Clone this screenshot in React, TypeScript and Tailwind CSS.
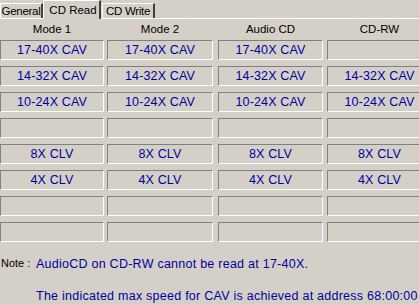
import React from 'react';

// 光驱读取速度表（经典 Windows 属性页样式）

type Cell = string | null;

const columns: { title: string; cells: Cell[] }[] = [
  { title: 'Mode 1', cells: ['17-40X CAV', '14-32X CAV', '10-24X CAV', null, '8X CLV', '4X CLV', null, null] },
  { title: 'Mode 2', cells: ['17-40X CAV', '14-32X CAV', '10-24X CAV', null, '8X CLV', '4X CLV', null, null] },
  { title: 'Audio CD', cells: ['17-40X CAV', '14-32X CAV', '10-24X CAV', null, '8X CLV', '4X CLV', null, null] },
  { title: 'CD-RW', cells: [null, '14-32X CAV', '10-24X CAV', null, '8X CLV', '4X CLV', null, null] },
];

// 每列的宽度和左边距，照原图的像素量出来
const colClass = [
  'w-[104px] shrink-0',
  'w-[106px] ml-[3px] shrink-0',
  'w-[105px] ml-[5px] shrink-0',
  'w-[105px] ml-[4px] shrink-0',
];

function Tab({ label, width, active = false }: { label: string; width: string; active?: boolean }) {
  if (active) {
    return (
      <div className={`${width} h-[19px] -mb-px pl-[3px] pt-[2px] bg-[#d4d0c8] border-l border-t border-white border-r-2 border-r-[#404040] text-[11.5px] leading-[14px] text-black text-center whitespace-nowrap`}>
        {label}
      </div>
    );
  }
  return (
    <div className={`${width} h-[15px] border-l border-t border-white border-r-2 border-r-[#404040] text-[11.5px] tracking-[-0.3px] leading-[14px] text-black text-center whitespace-nowrap`}>
      {label}
    </div>
  );
}

export default function App() {
  return (
    <div
      className="w-[419px] h-[305px] overflow-hidden bg-[#d4d0c8] relative"
      style={{ fontFamily: '"Liberation Sans", Arial, sans-serif' }}
    >
      {/* 标签栏 */}
      <div className="flex items-end h-[19px] border-b border-white">
        <Tab label="General" width="w-[43px]" />
        <Tab label="CD Read" width="w-[58px]" active />
        <Tab label="CD Write" width="w-[53px] ml-[1px]" />
      </div>

      {/* 速度表格 */}
      <div className="flex">
        {columns.map((col, i) => (
          <div key={col.title} className={colClass[i]}>
            <div className="h-[21px] flex items-center justify-center text-[11.5px] text-black pt-[1px]">
              {col.title}
            </div>
            <div className="flex flex-col gap-[6px]">
              {col.cells.map((c, j) => (
                <div
                  key={j}
                  className="h-[20px] border-t border-l border-[#808080] border-b border-r border-b-white border-r-white flex items-center justify-center text-[12.5px] tracking-[0.15px] text-[#0000a0]"
                >
                  {c}
                </div>
              ))}
            </div>
          </div>
        ))}
      </div>

      {/* 备注 */}
      <div className="mt-[15px] flex items-start">
        <div className="w-[36px] pl-[1px] mt-[1px] text-[11px] leading-[10px] text-black">Note :</div>
        <div className="text-[12.5px] tracking-[0.25px] leading-[14px] text-[#0000a0] flex flex-col gap-[18px]">
          <span>AudioCD on CD-RW cannot be read at 17-40X.</span>
          <span className="whitespace-nowrap">The indicated max speed for CAV is achieved at address 68:00:00</span>
        </div>
      </div>
    </div>
  );
}
